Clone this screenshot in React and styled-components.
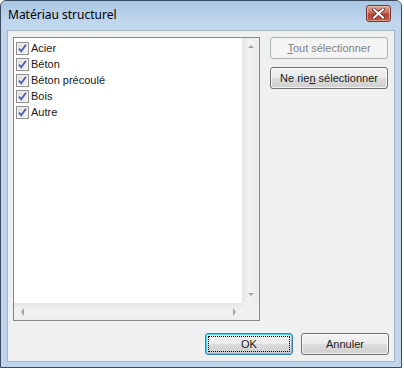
import React from "react";
import styled, { createGlobalStyle } from "styled-components";

const GlobalStyle = createGlobalStyle`
  body {
    margin: 0;
    background: #ffffff;
  }
`;

const items = ["Acier", "Béton", "Béton précoulé", "Bois", "Autre"];

function CheckMark() {
  return (
    <svg width="11" height="11" viewBox="0 0 11 11">
      <path d="M2 5.5 L4.2 8.2 L9 1.8" fill="none" stroke="#4b61a8" strokeWidth="1.8" />
    </svg>
  );
}

function CloseGlyph() {
  return (
    <svg width="13" height="11" viewBox="0 0 13 11">
      <path d="M2 1.5 L11 9.5 M11 1.5 L2 9.5" stroke="#5a2c2c" strokeWidth="3.6" strokeLinecap="square" />
      <path d="M2 1.5 L11 9.5 M11 1.5 L2 9.5" stroke="#ffffff" strokeWidth="2" strokeLinecap="square" />
    </svg>
  );
}

function Arrow({ dir }) {
  const d = {
    up: "M1 5 L4 2 L7 5 Z",
    down: "M1 2 L4 5 L7 2 Z",
    left: "M5 0 L2 4 L5 8 Z",
    right: "M3 0 L6 4 L3 8 Z",
  }[dir];
  const horizontal = dir === "left" || dir === "right";
  return (
    <svg width="8" height={horizontal ? 8 : 7} viewBox={horizontal ? "0 0 8 8" : "0 0 8 7"}>
      <path d={d} fill="#a3a3a3" />
    </svg>
  );
}

export default function App() {
  return (
    <>
      <GlobalStyle />
      <Window>
        <TitleBar>
          <Title>Matériau structurel</Title>
          <CloseButton>
            <CloseGlyph />
          </CloseButton>
        </TitleBar>
        <Client>
          <TopRow>
            <ListBox>
              <ListArea>
                <Items>
                  {items.map((label) => (
                    <Item key={label}>
                      <Check>
                        <CheckMark />
                      </Check>
                      <span>{label}</span>
                    </Item>
                  ))}
                </Items>
                <VScroll>
                  <ScrollArrow>
                    <Arrow dir="up" />
                  </ScrollArrow>
                  <ScrollTrack />
                  <ScrollArrow>
                    <Arrow dir="down" />
                  </ScrollArrow>
                </VScroll>
              </ListArea>
              <BottomBar>
                <HScroll>
                  <ScrollArrow>
                    <Arrow dir="left" />
                  </ScrollArrow>
                  <ScrollTrack />
                  <ScrollArrow>
                    <Arrow dir="right" />
                  </ScrollArrow>
                </HScroll>
                <Corner />
              </BottomBar>
            </ListBox>
            <SideButtons>
              <Button disabled>
                <Label>
                  <u>T</u>out sélectionner
                </Label>
              </Button>
              <Button>
                <Label>
                  Ne rie<u>n</u> sélectionner
                </Label>
              </Button>
            </SideButtons>
          </TopRow>
          <Footer>
            <Button $default $w={88}>
              <Focus>OK</Focus>
            </Button>
            <Button $w={88}>
              <Label>Annuler</Label>
            </Button>
          </Footer>
        </Client>
      </Window>
    </>
  );
}

const Window = styled.div`
  width: 402px;
  height: 368px;
  box-sizing: border-box;
  border: 1px solid #3a4a5c;
  border-radius: 6px 6px 0 0;
  background: #c0d5eb;
  display: flex;
  flex-direction: column;
  overflow: hidden;
`;

const TitleBar = styled.div`
  height: 29px;
  flex: none;
  display: flex;
  align-items: flex-start;
  justify-content: space-between;
  padding: 0 10px 0 7px;
  background: linear-gradient(#a9c5e3, #bdd4ec 60%, #c2d8ee);
`;

const Title = styled.span`
  font-family: "Noto Sans", "Open Sans", sans-serif;
  font-size: 12px;
  color: #000000;
  margin-top: 6px;
  line-height: 16px;
`;

const CloseButton = styled.div`
  margin-top: 4px;
  width: 25px;
  height: 17px;
  box-sizing: border-box;
  border: 1px solid #6b3636;
  border-radius: 3px;
  background: linear-gradient(#e0a297, #cd6d5f 45%, #b84332 55%, #c45a44);
  box-shadow: inset 0 0 0 1px rgba(255, 220, 210, 0.5);
  display: flex;
  align-items: center;
  justify-content: center;
`;

const Client = styled.div`
  flex: 1;
  margin: 0 6px 6px 6px;
  border: 1px solid #a2b6cc;
  background: #f0f0f0;
  padding: 6px 5px 6px 5px;
  display: flex;
  flex-direction: column;
  font-family: "Liberation Sans", Arial, sans-serif;
  font-size: 11px;
  font-weight: 400;
`;

const TopRow = styled.div`
  display: flex;
  gap: 10px;
`;

const ListBox = styled.div`
  width: 247px;
  height: 284px;
  box-sizing: border-box;
  border: 1px solid #828790;
  background: #ffffff;
  display: flex;
  flex-direction: column;
`;

const ListArea = styled.div`
  flex: 1;
  display: flex;
  min-height: 0;
`;

const Items = styled.div`
  flex: 1;
  padding: 2px 0 0 2px;
`;

const Item = styled.div`
  display: flex;
  align-items: center;
  height: 16px;
  gap: 2px;
  color: #1a1a1a;
`;

const Check = styled.span`
  width: 13px;
  height: 13px;
  box-sizing: border-box;
  border: 1px solid #8f8f8f;
  background: linear-gradient(135deg, #dcdcdc, #f6f6f6);
  box-shadow: inset 0 0 0 1px #f4f4f4;
  display: flex;
  align-items: center;
  justify-content: center;
`;

const VScroll = styled.div`
  width: 17px;
  display: flex;
  flex-direction: column;
  background: linear-gradient(90deg, #e6e6e6, #f2f2f2 40%, #ececec);
`;

const HScroll = styled.div`
  flex: 1;
  display: flex;
  background: linear-gradient(#e6e6e6, #f2f2f2 40%, #ececec);
`;

const ScrollArrow = styled.div`
  width: 17px;
  height: 17px;
  flex: none;
  display: flex;
  align-items: center;
  justify-content: center;
`;

const ScrollTrack = styled.div`
  flex: 1;
`;

const BottomBar = styled.div`
  height: 17px;
  display: flex;
`;

const Corner = styled.div`
  width: 17px;
  background: #f0f0f0;
`;

const SideButtons = styled.div`
  display: flex;
  flex-direction: column;
  gap: 8px;
`;

const Button = styled.button`
  width: ${(p) => p.$w || 118}px;
  height: 22px;
  box-sizing: border-box;
  padding: 0;
  font-family: inherit;
  font-size: 11px;
  font-weight: 400;
  border-radius: 3px;
  border: 1px solid ${(p) => (p.disabled ? "#adb2b5" : p.$default ? "#3c7fb1" : "#707070")};
  color: ${(p) => (p.disabled ? "#838383" : "#1a1a1a")};
  background: ${(p) =>
    p.disabled
      ? "#f4f4f4"
      : "linear-gradient(#f2f2f2, #ebebeb 50%, #dddddd 50%, #cfcfcf)"};
  box-shadow: inset 0 0 0 1px
    ${(p) => (p.disabled ? "#f4f4f4" : p.$default ? "#48d4f7" : "rgba(255,255,255,0.7)")};
  display: flex;
  align-items: center;
  justify-content: center;
`;

const Label = styled.span`
  white-space: pre;
`;

const Focus = styled.span`
  width: 82px;
  height: 16px;
  box-sizing: border-box;
  border: 1px dotted #000000;
  display: flex;
  align-items: center;
  justify-content: center;
`;

const Footer = styled.div`
  display: flex;
  justify-content: flex-end;
  gap: 8px;
  margin-top: 12px;
`;
